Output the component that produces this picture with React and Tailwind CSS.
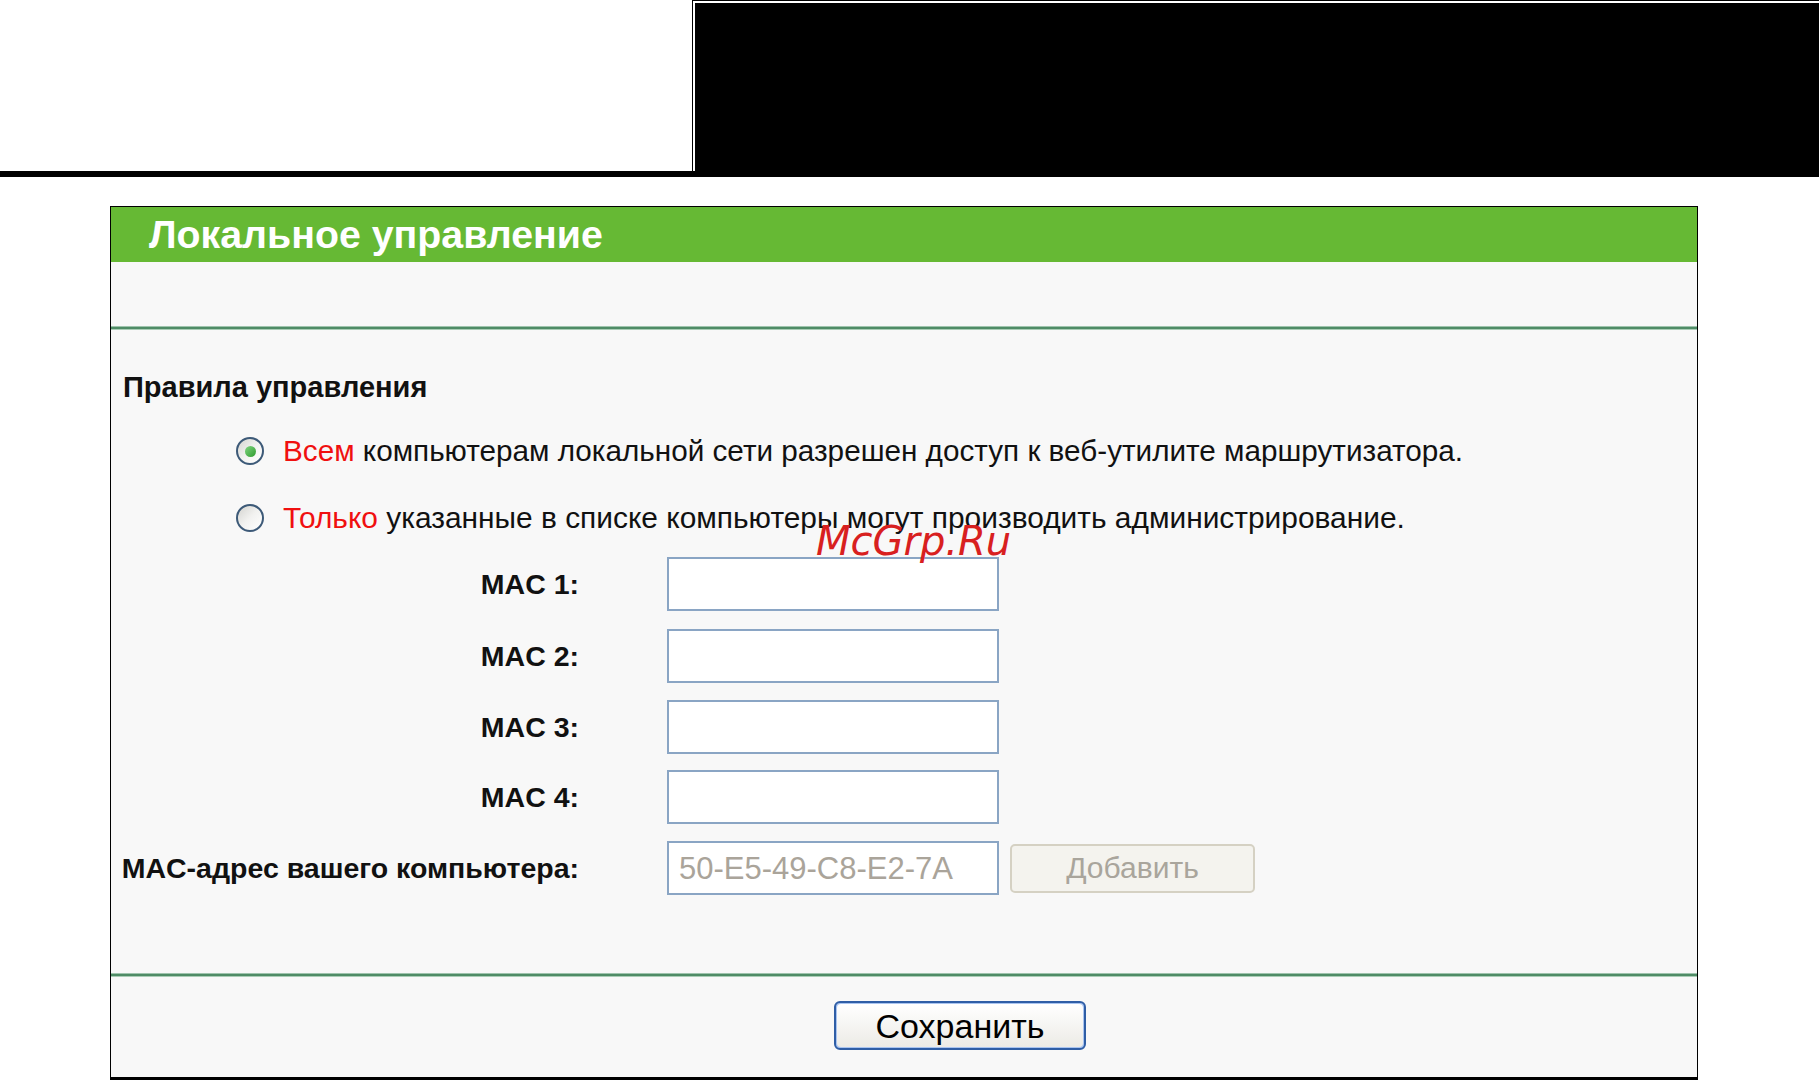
import React from 'react'

const LABEL = "w-[458px] shrink-0 whitespace-nowrap text-right font-bold text-[28.5px] leading-none text-[#111]"

function Radio({ checked }) {
  return (
    <div className="w-[28px] h-[28px] shrink-0 rounded-full border-2 border-[#3d5a78] bg-gradient-to-br from-[#d4d4d0] via-[#f2f2f0] to-white flex items-center justify-center">
      {checked && <div className="w-[11px] h-[11px] rounded-full bg-gradient-to-br from-[#7fd67f] to-[#2b9a2b]" />}
    </div>
  )
}

function MacField({ label, value, className }) {
  return (
    <div className={"flex items-center h-[54px] " + (className || "")}>
      <div className={LABEL}>{label}</div>
      <div className="ml-[88px] w-[332px] h-[54px] shrink-0 border-2 border-[#8aa5c4] bg-white flex items-center pl-[10px] text-[31px] leading-none text-[#aaa49a]">
        {value}
      </div>
    </div>
  )
}

function Separator({ className }) {
  return (
    <div className={"flex flex-col " + (className || "")}>
      <div className="h-px bg-[#9fc4ad]" />
      <div className="h-[2px] bg-[#4f8c66]" />
      <div className="h-px bg-[#aacdb6]" />
    </div>
  )
}

export default function App() {
  return (
    <div className="w-[1819px] h-[1080px] bg-white overflow-hidden relative font-['Liberation_Sans',Arial,sans-serif]">
      {/* top strip */}
      <div className="flex h-[171px]">
        <div className="w-[692px] shrink-0" />
        <div className="flex-1 bg-black pl-px pt-px">
          <div className="h-full border-l-2 border-t-2 border-white bg-black" />
        </div>
      </div>
      <div className="h-[6px] bg-black" />

      {/* panel */}
      <div className="mt-[29px] ml-[110px] w-[1588px] border border-black border-b-[3px] bg-[#f8f8f8]">
        <div className="h-[55px] bg-[#66b934] flex items-center pl-[38px]">
          <span className="text-white font-bold text-[39.3px] leading-none">Локальное управление</span>
        </div>
        <div className="h-[64px]" />
        <Separator />

        <div className="pl-[10px]">
          <div className="mt-[30px] ml-[2px] h-[54px] flex items-center font-bold text-[29px] leading-none text-[#111]">
            Правила управления
          </div>

          <div className="mt-[10px] h-[54px] flex items-center ml-[115px]">
            <Radio checked />
            <span className="ml-[19px] text-[29.7px] leading-none text-[#111]">
              <span className="text-[#f01010]">Всем</span> компьютерам локальной сети разрешен доступ к веб-утилите маршрутизатора.
            </span>
          </div>
          <div className="mt-[13px] h-[54px] flex items-center ml-[115px]">
            <Radio />
            <span className="ml-[19px] text-[29.9px] leading-none text-[#111]">
              <span className="text-[#f01010]">Только</span> указанные в списке компьютеры могут производить администрирование.
            </span>
          </div>

          <MacField label="MAC 1:" className="mt-[12px]" />
          <MacField label="MAC 2:" className="mt-[18px]" />
          <MacField label="MAC 3:" className="mt-[17px]" />
          <MacField label="MAC 4:" className="mt-[16px]" />
          <div className="mt-[17px] flex items-center h-[54px]">
            <div className={LABEL}>MAC-адрес вашего компьютера:</div>
            <div className="ml-[88px] w-[332px] h-[54px] shrink-0 border-2 border-[#8aa5c4] bg-white flex items-center pl-[10px] text-[31px] leading-none text-[#aaa49a]">
              50-E5-49-C8-E2-7A
            </div>
            <button className="ml-[11px] w-[245px] h-[49px] rounded-[5px] border-2 border-[#d5d1c3] bg-[#f4f3ee] text-[30px] leading-none text-[#a9a59c]">
              Добавить
            </button>
          </div>
        </div>

        <Separator className="mt-[78px]" />

        <div className="pl-[723px] pt-[24px] pb-[27px]">
          <button className="w-[252px] h-[49px] rounded-[6px] border-2 border-[#2f5ea6] p-px bg-[#a9c4f0]">
            <div className="w-full h-full rounded-[4px] bg-gradient-to-b from-white to-[#ecebe6] flex items-center justify-center text-[34px] leading-none text-black">
              Сохранить
            </div>
          </button>
        </div>
      </div>

      {/* watermark */}
      <div className="absolute left-[816px] top-[521px] font-['DejaVu_Sans',sans-serif] italic text-[40px] leading-none text-[#d8201f]">
        McGrp.Ru
      </div>
    </div>
  )
}
